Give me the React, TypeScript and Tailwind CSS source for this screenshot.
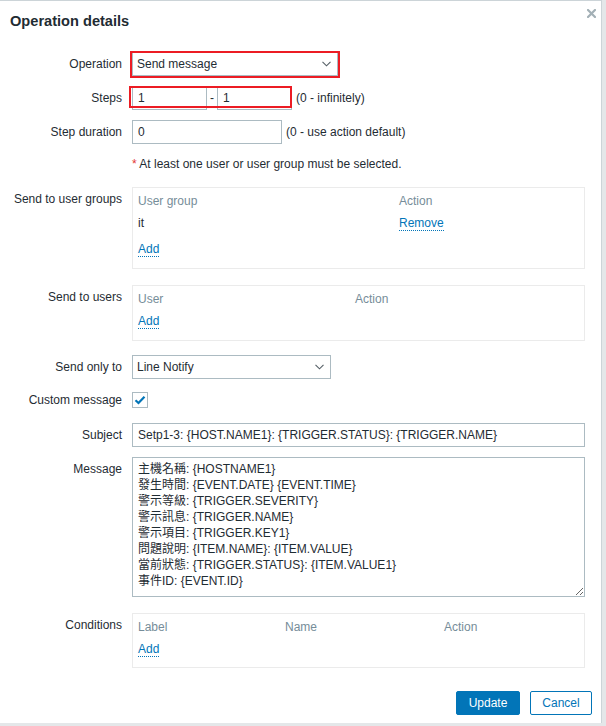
import React from "react";

const font = "font-['Liberation_Sans','Noto_Sans_CJK_TC',sans-serif]";

function Row({
  label,
  className = "",
  children,
}: {
  label?: string;
  className?: string;
  children: React.ReactNode;
}) {
  return (
    <div className={`flex items-start ${className}`}>
      <div className="w-[122px] shrink-0 text-right leading-[24px] h-[24px] whitespace-nowrap text-[#1f2c33]">
        {label}
      </div>
      <div className="ml-[10px] w-[453px]">{children}</div>
    </div>
  );
}

function Chevron() {
  return (
    <svg width="9" height="6" viewBox="0 0 9 6" className="block">
      <polyline points="0.5,0.8 4.5,4.8 8.5,0.8" fill="none" stroke="#555f66" strokeWidth="1.1" />
    </svg>
  );
}

function Select({ value, width }: { value: string; width: string }) {
  return (
    <div
      className={`${width} h-[24px] border border-[#acbbc2] bg-white flex items-center justify-between pl-[4px] pr-[6px] text-[#1f2c33] leading-[22px]`}
    >
      <span>{value}</span>
      <Chevron />
    </div>
  );
}

function Link({ children }: { children: React.ReactNode }) {
  return (
    <span className="inline-block leading-[14px] text-[#0275b8] border-b border-dotted border-[#0275b8]">
      {children}
    </span>
  );
}

export default function App() {
  const message = [
    "主機名稱: {HOSTNAME1}",
    "發生時間: {EVENT.DATE} {EVENT.TIME}",
    "警示等級: {TRIGGER.SEVERITY}",
    "警示訊息: {TRIGGER.NAME}",
    "警示項目: {TRIGGER.KEY1}",
    "問題說明: {ITEM.NAME}: {ITEM.VALUE}",
    "當前狀態: {TRIGGER.STATUS}: {ITEM.VALUE1}",
    "事件ID: {EVENT.ID}",
  ].join("\n");

  return (
    <div className={`w-[606px] h-[726px] bg-[#e4e7e9] overflow-hidden ${font} text-[12px]`}>
      <div className="relative w-[602px] h-[723px] bg-white border-t border-r border-[#ccd4d8]">
        {/* close */}
        <div className="absolute top-[8px] right-[5px]">
          <svg width="9" height="9" viewBox="0 0 9 9" className="block">
            <path d="M1 1 L8 8 M8 1 L1 8" stroke="#a3b0b6" strokeWidth="2.2" strokeLinecap="square" />
          </svg>
        </div>

        <div className="pt-[10px] pl-[10px] h-[30px]">
          <h4 className="h-[20px] leading-[20px] text-[14.6px] font-bold text-[#1f2c33]">Operation details</h4>
        </div>

        <div className="mt-[21px]">
          {/* Operation */}
          <Row label="Operation">
            <div className="relative w-[206px]">
              <Select value="Send message" width="w-[206px]" />
              <div className="absolute left-[-2px] top-[-1px] w-[210px] h-[27px] border-2 border-[#ec1c24]" />
            </div>
          </Row>

          {/* Steps */}
          <Row label="Steps" className="mt-[10px]">
            <div className="flex items-center">
              <div className="relative flex items-center">
                <div className="w-[75px] h-[24px] border border-[#acbbc2] pl-[5px] leading-[22px] text-[#1f2c33]">1</div>
                <div className="w-[10px] text-center leading-[24px] text-[#1f2c33]">-</div>
                <div className="w-[75px] h-[24px] border border-[#acbbc2] pl-[5px] leading-[22px] text-[#1f2c33]">1</div>
                <div className="absolute left-[-3px] top-0 w-[163px] h-[22px] border-2 border-[#ec1c24]" />
              </div>
              <span className="ml-[4px] text-[#1f2c33] leading-[24px]">(0 - infinitely)</span>
            </div>
          </Row>

          {/* Step duration */}
          <Row label="Step duration" className="mt-[10px]">
            <div className="flex items-center">
              <div className="w-[150px] h-[24px] border border-[#acbbc2] pl-[5px] leading-[22px] text-[#1f2c33]">0</div>
              <span className="ml-[4px] text-[#1f2c33] leading-[24px]">(0 - use action default)</span>
            </div>
          </Row>

          {/* note */}
          <Row className="mt-[8px]">
            <div className="leading-[24px] text-[#1f2c33]">
              <span className="text-[#e33734]">*</span> At least one user or user group must be selected.
            </div>
          </Row>

          {/* Send to user groups */}
          <Row label="Send to user groups" className="mt-[11px]">
            <div className="h-[82px] border border-[#ebebeb] pt-[4px] px-[5px]">
              <div className="grid grid-cols-[261px_1fr] h-[18px] leading-[18px] text-[#768d99]">
                <span>User group</span>
                <span>Action</span>
              </div>
              <div className="grid grid-cols-[261px_1fr] mt-[2px] h-[22px] items-center text-[#1f2c33]">
                <span>it</span>
                <span>
                  <Link>Remove</Link>
                </span>
              </div>
              <div className="mt-[6px] h-[18px] flex items-center">
                <Link>Add</Link>
              </div>
            </div>
          </Row>

          {/* Send to users */}
          <Row label="Send to users" className="mt-[16px]">
            <div className="h-[56px] border border-[#ebebeb] pt-[4px] px-[5px]">
              <div className="grid grid-cols-[217px_1fr] h-[18px] leading-[18px] text-[#768d99]">
                <span>User</span>
                <span>Action</span>
              </div>
              <div className="mt-[4px] h-[18px] flex items-center">
                <Link>Add</Link>
              </div>
            </div>
          </Row>

          {/* Send only to */}
          <Row label="Send only to" className="mt-[14px]">
            <Select value="Line Notify" width="w-[199px]" />
          </Row>

          {/* Custom message */}
          <Row label="Custom message" className="mt-[9px]">
            <div className="h-[24px] flex items-center">
              <div className="w-[16px] h-[16px] border border-[#acbbc2] bg-white flex items-center justify-center">
                <svg width="12" height="10" viewBox="0 0 12 10" className="block">
                  <path d="M1.5 5.2 L4.5 8 L10.5 1.8" fill="none" stroke="#0275b8" strokeWidth="2.2" />
                </svg>
              </div>
            </div>
          </Row>

          {/* Subject */}
          <Row label="Subject" className="mt-[11px]">
            <div className="h-[24px] border border-[#acbbc2] pl-[5px] leading-[22px] text-[#1f2c33] whitespace-nowrap">
              Setp1-3: {"{HOST.NAME1}"}: {"{TRIGGER.STATUS}"}: {"{TRIGGER.NAME}"}
            </div>
          </Row>

          {/* Message */}
          <Row label="Message" className="mt-[10px]">
            <textarea
              readOnly
              value={message}
              className="block w-[453px] h-[140px] border border-[#acbbc2] pt-[3px] pl-[5px] pr-[5px] leading-[16px] text-[12px] text-[#1f2c33] outline-none"
            />
          </Row>

          {/* Conditions */}
          <Row label="Conditions" className="mt-[16px]">
            <div className="h-[55px] border border-[#ebebeb] pt-[4px] px-[5px]">
              <div className="grid grid-cols-[147px_159px_1fr] h-[18px] leading-[18px] text-[#768d99]">
                <span>Label</span>
                <span>Name</span>
                <span>Action</span>
              </div>
              <div className="mt-[4px] h-[18px] flex items-center">
                <Link>Add</Link>
              </div>
            </div>
          </Row>

          {/* Buttons */}
          <div className="mt-[23px] flex justify-end gap-[10px] pr-[9px]">
            <button className="w-[64px] h-[24px] rounded-[2px] bg-[#0275b8] text-white border border-[#0275b8] leading-[22px]">
              Update
            </button>
            <button className="w-[62px] h-[24px] rounded-[2px] bg-white text-[#0275b8] border border-[#0275b8] leading-[22px]">
              Cancel
            </button>
          </div>
        </div>
      </div>
    </div>
  );
}
